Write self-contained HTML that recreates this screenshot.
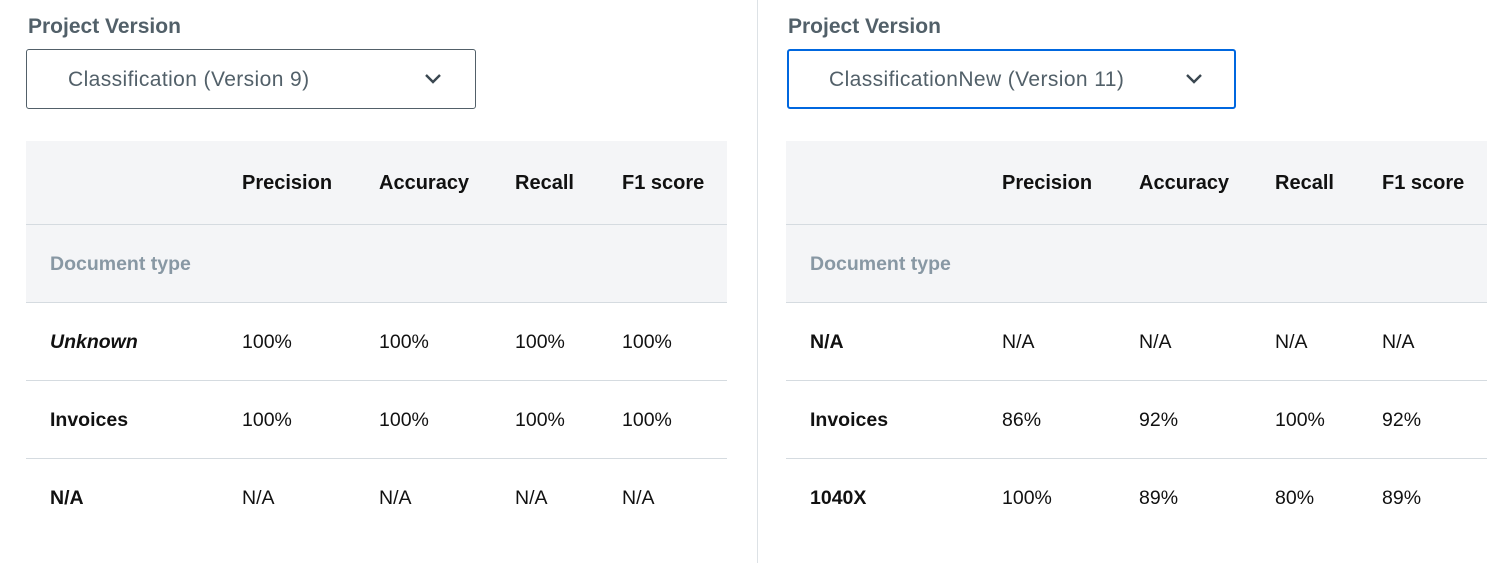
<!DOCTYPE html>
<html><head><style>
*{margin:0;padding:0;box-sizing:border-box}
body{width:1510px;height:563px;background:#fff;position:relative;overflow:hidden;font-family:"Liberation Sans","DejaVu Sans",sans-serif;color:#111}
.divider{position:absolute;left:757px;top:0;width:1px;height:563px;background:#dde2e6}
.lbl{position:absolute;font-size:21px;font-weight:bold;color:#526069;top:15px}
.sel{position:absolute;top:49px;height:60px;border:1px solid #526069;border-radius:3px;font-size:21px;letter-spacing:0.4px;color:#526069;padding-left:41px;line-height:60px}
.sel.f{border:2px solid #0067df;padding-left:40px;line-height:58px}
.sel svg{position:absolute;top:23px}
.tbl{position:absolute;top:141px;width:701px}
.tbl div.r{position:relative;height:78px;border-bottom:1px solid #d5dbe0}
.tbl div.h{height:84px;background:#f4f5f7}
.tbl .g{background:#f4f5f7}
.c{position:absolute;top:0;line-height:78px;font-size:19.5px}
.h .c{line-height:84px;font-weight:bold;font-size:20px}
.b{font-weight:bold}
.dt{color:#8898a4;font-weight:bold}
</style></head><body>
<div class="divider"></div>

<div class="lbl" style="left:28px">Project Version</div>
<div class="sel" style="left:26px;width:450px">Classification (Version 9)
<svg style="left:397px" width="18" height="12" viewBox="0 0 18 12"><path d="M2 2l7 7 7-7" fill="none" stroke="#3a4750" stroke-width="2.4"/></svg></div>
<div class="tbl" style="left:26px">
<div class="r h"><span class="c" style="left:216px">Precision</span><span class="c" style="left:353px">Accuracy</span><span class="c" style="left:489px">Recall</span><span class="c" style="left:596px">F1 score</span></div>
<div class="r g"><span class="c dt" style="left:24px">Document type</span></div>
<div class="r"><span class="c b" style="left:24px;font-style:italic">Unknown</span><span class="c" style="left:216px">100%</span><span class="c" style="left:353px">100%</span><span class="c" style="left:489px">100%</span><span class="c" style="left:596px">100%</span></div>
<div class="r"><span class="c b" style="left:24px">Invoices</span><span class="c" style="left:216px">100%</span><span class="c" style="left:353px">100%</span><span class="c" style="left:489px">100%</span><span class="c" style="left:596px">100%</span></div>
<div class="r" style="border:none"><span class="c b" style="left:24px">N/A</span><span class="c" style="left:216px">N/A</span><span class="c" style="left:353px">N/A</span><span class="c" style="left:489px">N/A</span><span class="c" style="left:596px">N/A</span></div>
</div>

<div class="lbl" style="left:788px">Project Version</div>
<div class="sel f" style="left:787px;width:449px">ClassificationNew (Version 11)
<svg style="left:396px;top:22px" width="18" height="12" viewBox="0 0 18 12"><path d="M2 2l7 7 7-7" fill="none" stroke="#3a4750" stroke-width="2.4"/></svg></div>
<div class="tbl" style="left:786px">
<div class="r h"><span class="c" style="left:216px">Precision</span><span class="c" style="left:353px">Accuracy</span><span class="c" style="left:489px">Recall</span><span class="c" style="left:596px">F1 score</span></div>
<div class="r g"><span class="c dt" style="left:24px">Document type</span></div>
<div class="r"><span class="c b" style="left:24px">N/A</span><span class="c" style="left:216px">N/A</span><span class="c" style="left:353px">N/A</span><span class="c" style="left:489px">N/A</span><span class="c" style="left:596px">N/A</span></div>
<div class="r"><span class="c b" style="left:24px">Invoices</span><span class="c" style="left:216px">86%</span><span class="c" style="left:353px">92%</span><span class="c" style="left:489px">100%</span><span class="c" style="left:596px">92%</span></div>
<div class="r" style="border:none"><span class="c b" style="left:24px">1040X</span><span class="c" style="left:216px">100%</span><span class="c" style="left:353px">89%</span><span class="c" style="left:489px">80%</span><span class="c" style="left:596px">89%</span></div>
</div>
</body></html>
